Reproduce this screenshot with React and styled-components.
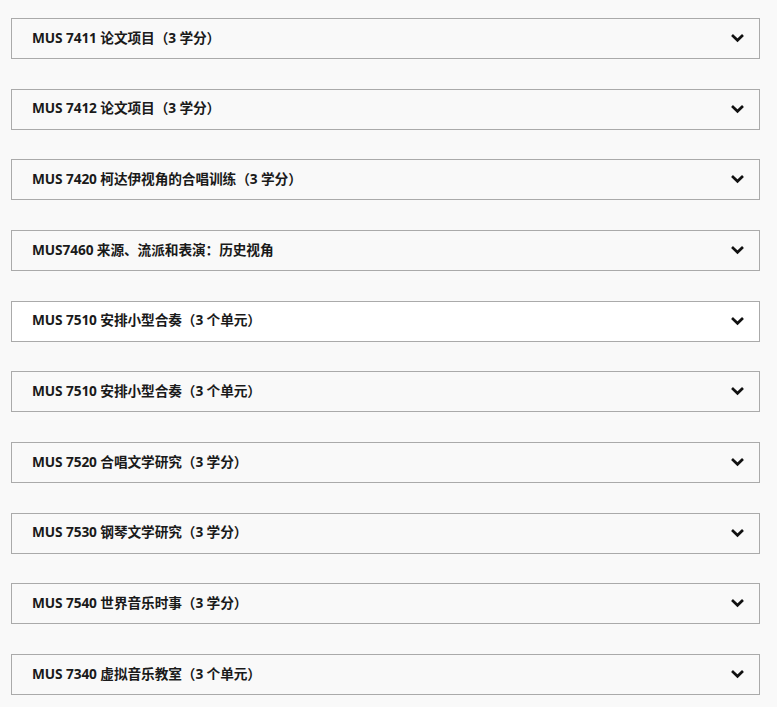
import React from "react";
import styled, { createGlobalStyle } from "styled-components";

const GlobalStyle = createGlobalStyle`
  html, body {
    margin: 0;
    padding: 0;
    background: #f9f9f9;
  }
  body {
    font-family: "Open Sans", "Noto Sans CJK SC", sans-serif;
  }
`;

// Accordion list
const List = styled.div`
  display: flex;
  flex-direction: column;
  gap: 29.67px;
  padding: 18px 17px 0 11px;
`;

const Item = styled.div`
  box-sizing: border-box;
  height: 41px;
  border: 1px solid #aaaaaa;
  background: ${({ active }) => (active ? "#ffffff" : "#f9f9f9")};
  display: flex;
  align-items: center;
  justify-content: space-between;
  padding: 0 15px 2px 20px;
  cursor: pointer;
`;

const Title = styled.span`
  font-family: "Open Sans", "Noto Sans CJK SC", sans-serif;
  font-size: 13.7px;
  line-height: 1;
  font-weight: 700;
  color: #1a1a1a;
  letter-spacing: -0.1px;
`;

const ChevronWrap = styled.span`
  display: flex;
  padding-top: 2px;
`;

const Chevron = () => (
  <ChevronWrap>
    <svg width="13" height="9" viewBox="0 0 13 9">
      <path d="M2 2 L6.5 6.3 L11 2" fill="none" stroke="#111" strokeWidth="2.7" strokeLinecap="square" />
    </svg>
  </ChevronWrap>
);

const courses = [
  "MUS 7411 论文项目（3 学分）",
  "MUS 7412 论文项目（3 学分）",
  "MUS 7420 柯达伊视角的合唱训练（3 学分）",
  "MUS7460 来源、流派和表演：历史视角",
  "MUS 7510 安排小型合奏（3 个单元）",
  "MUS 7510 安排小型合奏（3 个单元）",
  "MUS 7520 合唱文学研究（3 学分）",
  "MUS 7530 钢琴文学研究（3 学分）",
  "MUS 7540 世界音乐时事（3 学分）",
  "MUS 7340 虚拟音乐教室（3 个单元）",
];

export default function App() {
  return (
    <>
      <GlobalStyle />
      <List>
        {courses.map((c, i) => (
          <Item key={i} active={i === 4}>
            <Title>{c}</Title>
            <Chevron />
          </Item>
        ))}
      </List>
    </>
  );
}
